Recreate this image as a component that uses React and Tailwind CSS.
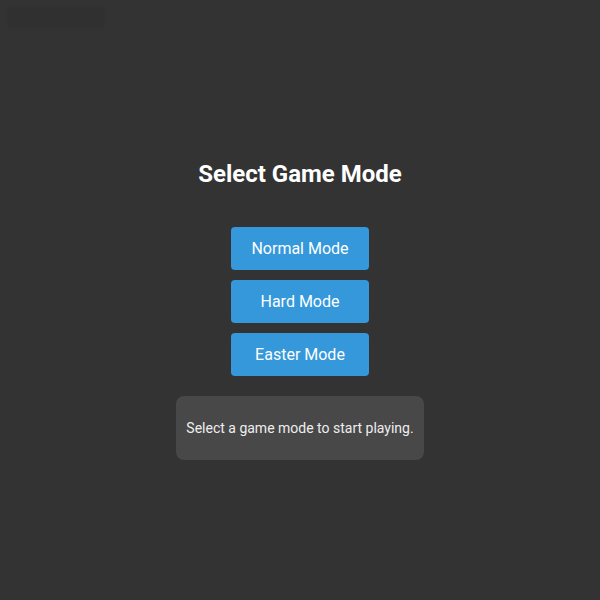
import React from 'react';

const modes = ['Normal Mode', 'Hard Mode', 'Easter Mode'];

const App = () => {
  return (
    <div className="relative w-full h-[600px] bg-[#333333] font-['Roboto',sans-serif] text-white">
      {/* faint placeholder top-left */}
      <div className="absolute left-[8px] top-[7px] w-[96px] h-[21px] bg-[#303030] blur-[1px]" />

      <div className="flex flex-col items-center pt-[158px]">
        <h1 className="text-[24px] leading-[32px] font-bold">Select Game Mode</h1>

        <div className="flex flex-col gap-[10px] mt-[37px]">
          {modes.map((m) => (
            <button
              key={m}
              className="w-[138px] h-[43px] rounded-[4px] bg-[#3498db] text-[16px] text-white"
            >
              {m}
            </button>
          ))}
        </div>

        <div className="mt-[20px] w-[248px] h-[64px] rounded-[8px] bg-[#484848] flex items-center justify-center text-[14px] text-[#eeeeee]">
          Select a game mode to start playing.
        </div>
      </div>
    </div>
  );
};

export default App;
